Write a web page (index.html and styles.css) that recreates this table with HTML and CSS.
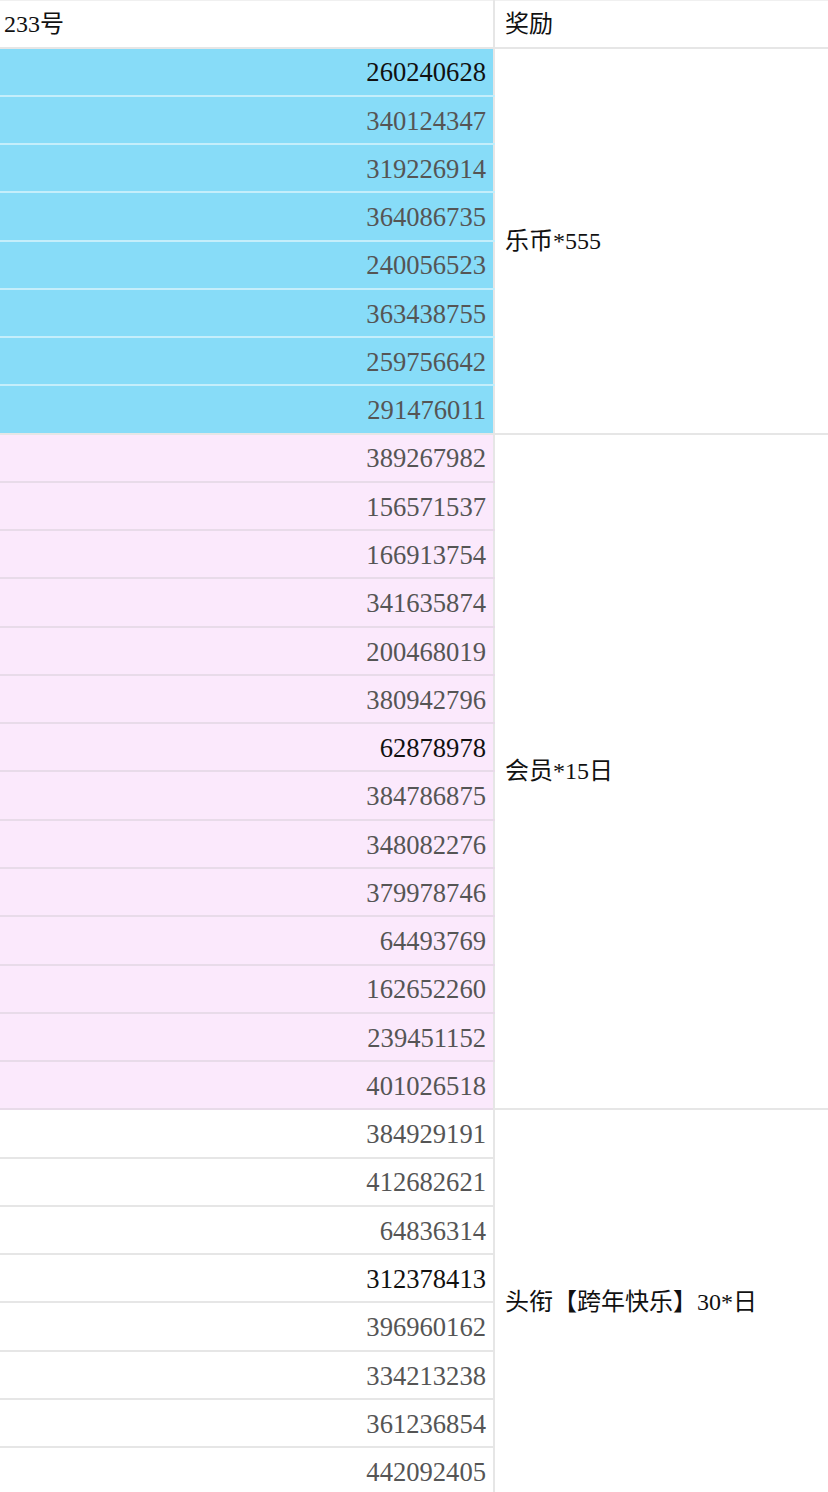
FILE: index.html
```html
<!DOCTYPE html>
<html lang="zh">
<head>
<meta charset="utf-8">
<title>233号 奖励</title>
<link rel="stylesheet" href="styles.css">
</head>
<body>
<table class="prize-table">
  <thead>
    <tr>
      <th class="col-id">233号</th>
      <th class="col-reward">奖励</th>
    </tr>
  </thead>
  <tbody class="group blue">
    <tr><td class="num dark">260240628</td><td class="reward" rowspan="8">乐币*555</td></tr>
    <tr><td class="num">340124347</td></tr>
    <tr><td class="num">319226914</td></tr>
    <tr><td class="num">364086735</td></tr>
    <tr><td class="num">240056523</td></tr>
    <tr><td class="num">363438755</td></tr>
    <tr><td class="num">259756642</td></tr>
    <tr><td class="num">291476011</td></tr>
  </tbody>
  <tbody class="group pink">
    <tr><td class="num">389267982</td><td class="reward" rowspan="14">会员*15日</td></tr>
    <tr><td class="num">156571537</td></tr>
    <tr><td class="num">166913754</td></tr>
    <tr><td class="num">341635874</td></tr>
    <tr><td class="num">200468019</td></tr>
    <tr><td class="num">380942796</td></tr>
    <tr><td class="num dark">62878978</td></tr>
    <tr><td class="num">384786875</td></tr>
    <tr><td class="num">348082276</td></tr>
    <tr><td class="num">379978746</td></tr>
    <tr><td class="num">64493769</td></tr>
    <tr><td class="num">162652260</td></tr>
    <tr><td class="num">239451152</td></tr>
    <tr><td class="num">401026518</td></tr>
  </tbody>
  <tbody class="group plain">
    <tr><td class="num">384929191</td><td class="reward" rowspan="8">头衔【跨年快乐】30*日</td></tr>
    <tr><td class="num">412682621</td></tr>
    <tr><td class="num">64836314</td></tr>
    <tr><td class="num dark">312378413</td></tr>
    <tr><td class="num">396960162</td></tr>
    <tr><td class="num">334213238</td></tr>
    <tr><td class="num">361236854</td></tr>
    <tr><td class="num">442092405</td></tr>
  </tbody>
</table>
</body>
</html>
```

FILE: styles.css
```css
html, body {
  margin: 0;
  padding: 0;
  background: #ffffff;
}

body {
  font-family: "Liberation Serif", "Noto Sans CJK SC", serif;
  color: #111111;
}

.prize-table {
  width: 828px;
  border-collapse: collapse;
  table-layout: fixed;
  border-top: 1px solid #f0f0f0;
}

.prize-table th,
.prize-table td {
  padding: 0;
  font-size: 26.6px;
  font-weight: normal;
  line-height: 1;
  border-bottom: 2px solid #e6e6e6;
  border-right: 2px solid #e6e6e6;
}

.prize-table tr {
  height: 48.28px;
}

.prize-table thead tr {
  height: 47px;
}

.col-id {
  width: 489px;
  text-align: left;
  padding-left: 4px !important;
  vertical-align: middle;
  font-size: 24px !important;
}

.col-reward {
  text-align: left;
  padding-left: 10px !important;
  border-right: none !important;
  font-size: 24px !important;
}

.num {
  text-align: right;
  padding: 2px 7px 0 0 !important;
  color: #555555;
  vertical-align: middle;
}

.num.dark {
  color: #111111;
}

.reward {
  text-align: left;
  padding-left: 10px !important;
  vertical-align: middle;
  border-right: none !important;
  font-size: 24px !important;
  background: #ffffff;
}

.blue .num {
  background: #87dcf8;
  border-bottom-color: #c4eefb;
}

.blue tr:last-child .num {
  border-bottom-color: #e6e6e6;
}

.pink .num {
  background: #fbe9fc;
  border-bottom-color: #e8dbe9;
}

.plain .num {
  background: #ffffff;
}
```
